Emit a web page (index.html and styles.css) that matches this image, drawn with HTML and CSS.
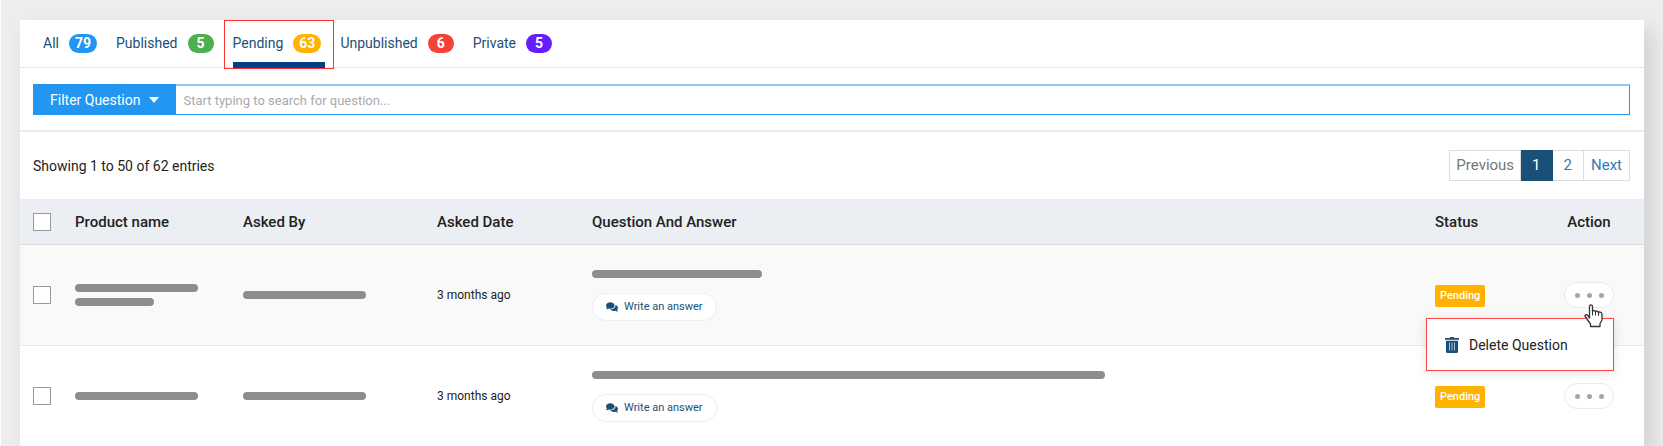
FILE: index.html
```html
<!DOCTYPE html>
<html lang="en">
<head>
    <meta charset="UTF-8">
    <meta name="viewport" content="width=device-width, initial-scale=1.0">
    <title>Questions and Answers</title>
    <link rel="stylesheet" href="styles.css">
</head>
<body>
    <!-- shared icons -->
    <svg class="sprite" aria-hidden="true">
        <symbol id="comments" viewBox="0 0 12 10">
            <path d="M4.3 0.2C1.9 0.2 0 1.7 0 3.5c0 .8.4 1.5.9 2.1C.7 6.3.2 6.9.1 7c-.1.1 0 .3.1.3 1 0 1.9-.4 2.5-.8.5.1 1 .2 1.6.2 2.4 0 4.3-1.4 4.3-3.2S6.7.2 4.3.2z"/>
            <path d="M11.1 7.8c.5-.6.9-1.3.9-2 0-1.3-1-2.4-2.5-2.9C9.7 5.6 7.3 7.3 4.2 7.3c.7 1 2 1.6 3.5 1.6.6 0 1.1-.1 1.6-.2.6.4 1.5.8 2.5.8.1 0 .2-.2.1-.3-.1-.1-.6-.7-.8-1.4z"/>
        </symbol>
    </svg>

    <div class="container">
        <nav class="tabs">
            <a href="#" class="tab">All <span class="count blue">79</span></a>
            <a href="#" class="tab">Published <span class="count green">5</span></a>
            <a href="#" class="tab active">Pending <span class="count amber">63</span></a>
            <a href="#" class="tab">Unpublished <span class="count red">6</span></a>
            <a href="#" class="tab">Private <span class="count purple">5</span></a>
        </nav>

        <form class="filter">
            <button type="button" class="filter-button">Filter Question <span class="caret"></span></button>
            <input type="text" class="search" aria-label="Search questions" placeholder="Start typing to search for question...">
        </form>

        <div class="summary">
            <span>Showing 1 to 50 of 62 entries</span>
            <nav class="pagination">
                <a href="#" class="page disabled">Previous</a>
                <a href="#" class="page current">1</a>
                <a href="#" class="page">2</a>
                <a href="#" class="page">Next</a>
            </nav>
        </div>

        <table>
            <thead>
                <tr>
                    <th class="col-check"><input type="checkbox" aria-label="Select all"></th>
                    <th class="col-product">Product name</th>
                    <th class="col-by">Asked By</th>
                    <th class="col-date">Asked Date</th>
                    <th>Question And Answer</th>
                    <th class="col-status">Status</th>
                    <th class="col-action">Action</th>
                </tr>
            </thead>
            <tbody>
                <tr>
                    <td class="col-check"><input type="checkbox" aria-label="Select question 1"></td>
                    <td>
                        <div class="bars">
                            <div class="bar"></div>
                            <div class="bar short"></div>
                        </div>
                    </td>
                    <td><div class="bar"></div></td>
                    <td class="date">3 months ago</td>
                    <td>
                        <div class="question">
                            <div class="bar medium"></div>
                            <button type="button" class="answer"><svg class="icon-comments"><use href="#comments"/></svg>Write an answer</button>
                        </div>
                    </td>
                    <td><span class="status">Pending</span></td>
                    <td class="col-action">
                        <div class="action">
                            <button type="button" class="more" aria-label="Actions"><i></i><i></i><i></i></button>
                            <div class="menu">
                                <button type="button" class="menu-item">
                                    <svg class="icon-trash" viewBox="0 0 14 16">
                                        <path fill="#1a5078" d="M0 1h4.500L5.300 0h3.400l.8 1H14v1.800H0zM1 3.800h12V14.500a1.500 1.500 0 0 1-1.500 1.500h-9A1.500 1.500 0 0 1 1 14.500z"/>
                                        <path stroke="#a9c0d0" d="M4.500 5.500v8M7 5.500v8M9.500 5.500v8"/>
                                    </svg>
                                    Delete Question
                                </button>
                            </div>
                            <svg class="pointer" viewBox="0 0 19 24">
                                <path fill="#fff" stroke="#333" stroke-width="1.300" stroke-linejoin="round" d="M5.500 14V2.500C5.500 .2 8.500 .2 8.500 2.500V8C8.500 6 11.500 6 11.500 8.200 11.500 6.500 14.500 6.500 14.500 9 14.500 7.500 18 7.500 18 10.500V16L16 19.500V22.500H6.500V20L1.200 12.500C.5 11 2.300 10 3.500 11.200z"/>
                                <path fill="none" stroke="#333" d="M8.500 7.500v4M11.500 8v3.500M14.500 9v3"/>
                            </svg>
                        </div>
                    </td>
                </tr>
                <tr>
                    <td class="col-check"><input type="checkbox" aria-label="Select question 2"></td>
                    <td><div class="bar"></div></td>
                    <td><div class="bar"></div></td>
                    <td class="date">3 months ago</td>
                    <td>
                        <div class="question">
                            <div class="bar long"></div>
                            <button type="button" class="answer"><svg class="icon-comments"><use href="#comments"/></svg>Write an answer</button>
                        </div>
                    </td>
                    <td><span class="status">Pending</span></td>
                    <td class="col-action">
                        <div class="action">
                            <button type="button" class="more" aria-label="Actions"><i></i><i></i><i></i></button>
                        </div>
                    </td>
                </tr>
            </tbody>
        </table>
    </div>
</body>
</html>
```
FILE: styles.css
```css
* {
    box-sizing: border-box;
}

body {
    margin: 0;
    padding: 20px 19px 0;
    border-left: 1px solid #fff;
    background-color: #ededed;
    font-family: Roboto, sans-serif;
    font-size: 14px;
    line-height: 20px;
    color: #222;
}

a {
    text-decoration: none;
}

button, input {
    font-family: inherit;
    font-size: inherit;
}

.sprite {
    position: absolute;
    width: 0;
    height: 0;
}

.container {
    background: #fff;
    box-shadow: 8px 10px 20px rgba(0, 0, 0, 0.12);
}

/* tabs */
.tabs {
    display: flex;
    gap: 19px;
    height: 48px;
    padding: 0 23px;
    border-bottom: 1px solid #e4e6e8;
}

.tab {
    position: relative;
    display: flex;
    align-items: center;
    gap: 10px;
    padding-bottom: 1px;
    color: #1a5078;
}

.tab.active::before {
    content: "";
    position: absolute;
    inset: 0 -13px -2px -9px;
    border: 1px solid #f33;
}

.tab.active::after {
    content: "";
    position: absolute;
    left: 0;
    right: -4px;
    bottom: -1px;
    height: 6px;
    background: #003e8a;
}

.count {
    min-width: 26px;
    padding: 0 6px;
    border-radius: 10px;
    font-weight: bold;
    line-height: 19px;
    text-align: center;
    color: #fff;
}

.blue { background: #2196f3; }
.green { background: #4caf50; }
.amber { background: #ffb300; }
.red { background: #f44336; }
.purple { background: #651fff; }

/* filter */
.filter {
    display: flex;
    padding: 16px 14px 15px 13px;
    border-bottom: 2px solid #ebebeb;
}

.filter-button {
    display: flex;
    align-items: center;
    gap: 9px;
    height: 31px;
    padding: 0 17px;
    border: none;
    background: #2196f3;
    color: #fff;
}

.caret {
    border: 5px solid transparent;
    border-top: 6px solid #fff;
    border-bottom: none;
}

.search {
    flex: 1;
    height: 31px;
    padding: 0 7px;
    border: 1px solid #2196f3;
    border-top: 2px solid #90caf9;
    border-left: none;
    border-radius: 0;
    outline: none;
    font-size: 13px;
}

.search::placeholder {
    color: #aaa;
}

/* entries and pages */
.summary {
    display: flex;
    justify-content: space-between;
    align-items: center;
    padding: 18px 14px 18px 13px;
}

.pagination {
    display: flex;
    height: 31px;
    font-size: 15px;
}

.page {
    padding: 0 7px;
    border: 1px solid #ddd;
    border-left: none;
    line-height: 29px;
    color: #337ab7;
}

.page.disabled {
    padding: 0 6px;
    border-left: 1px solid #ddd;
    color: #777;
}

.page.current {
    padding: 0 11px;
    border-color: #1a5078;
    background: #1a5078;
    color: #fff;
}

.page.current + .page {
    padding: 0 11px;
}

/* table */
table {
    width: 100%;
    table-layout: fixed;
    border-collapse: separate;
    border-spacing: 0;
}

th, td {
    padding: 0;
    text-align: left;
    vertical-align: middle;
}

th {
    height: 46px;
    border-bottom: 1px solid #d9dcdf;
    background: #ebeef3;
    font-size: 15px;
    font-weight: 500;
}

td {
    height: 101px;
    border-bottom: 1px solid #e8e8e8;
}

tbody tr:nth-child(odd) {
    background: #f9f9f9;
}

.col-check {
    width: 55px;
    padding-left: 13px;
}

.col-product { width: 168px; }
.col-by { width: 194px; }
.col-date { width: 155px; }
.col-status { width: 129px; }

.col-action {
    width: 80px;
    padding-right: 30px;
    text-align: center;
}

input[type="checkbox"] {
    display: block;
    appearance: none;
    width: 18px;
    height: 18px;
    margin: 0;
    border: 1px solid #999;
    background: #fff;
}

.bars {
    display: grid;
    gap: 6px;
}

.bar {
    width: 123px;
    height: 8px;
    border-radius: 4px;
    background: #8d8d8d;
}

.bar.short { width: 79px; }
.bar.medium { width: 170px; }
.bar.long { width: 513px; }

.date {
    font-size: 12px;
}

.question {
    display: flex;
    flex-direction: column;
    align-items: flex-start;
    gap: 15px;
}

.answer {
    display: flex;
    align-items: center;
    gap: 6px;
    height: 28px;
    padding: 0 13px;
    border: 1px solid #ebeef7;
    border-radius: 14px;
    background: #fff;
    font-size: 11px;
    color: #1a5078;
}

.icon-comments {
    width: 12px;
    height: 10px;
    fill: #1a5078;
}

.status {
    display: inline-block;
    padding: 0 5px;
    border-radius: 2px;
    background: #ffb300;
    font-size: 11px;
    font-weight: 500;
    line-height: 22px;
    color: #fff;
}

.action {
    position: relative;
}

.more {
    display: flex;
    justify-content: center;
    align-items: center;
    gap: 7px;
    width: 50px;
    height: 26px;
    padding: 0;
    border: 1px solid #e3ebf7;
    border-radius: 13px;
    background: #fff;
}

.more i {
    width: 5px;
    height: 5px;
    border-radius: 50%;
    background: #a5a5a5;
}

.menu {
    position: absolute;
    top: 36px;
    right: 0;
    z-index: 1;
    width: 188px;
    border: 1px solid #f44;
    background: #fff;
    box-shadow: 0 2px 10px rgba(0, 0, 0, 0.12);
}

.menu-item {
    display: flex;
    align-items: center;
    gap: 10px;
    width: 100%;
    height: 51px;
    padding: 0 18px;
    border: none;
    background: none;
    color: #222;
}

.icon-trash {
    width: 14px;
    height: 16px;
}

.pointer {
    position: absolute;
    top: 22px;
    left: 20px;
    z-index: 2;
    width: 19px;
    height: 24px;
}
```
